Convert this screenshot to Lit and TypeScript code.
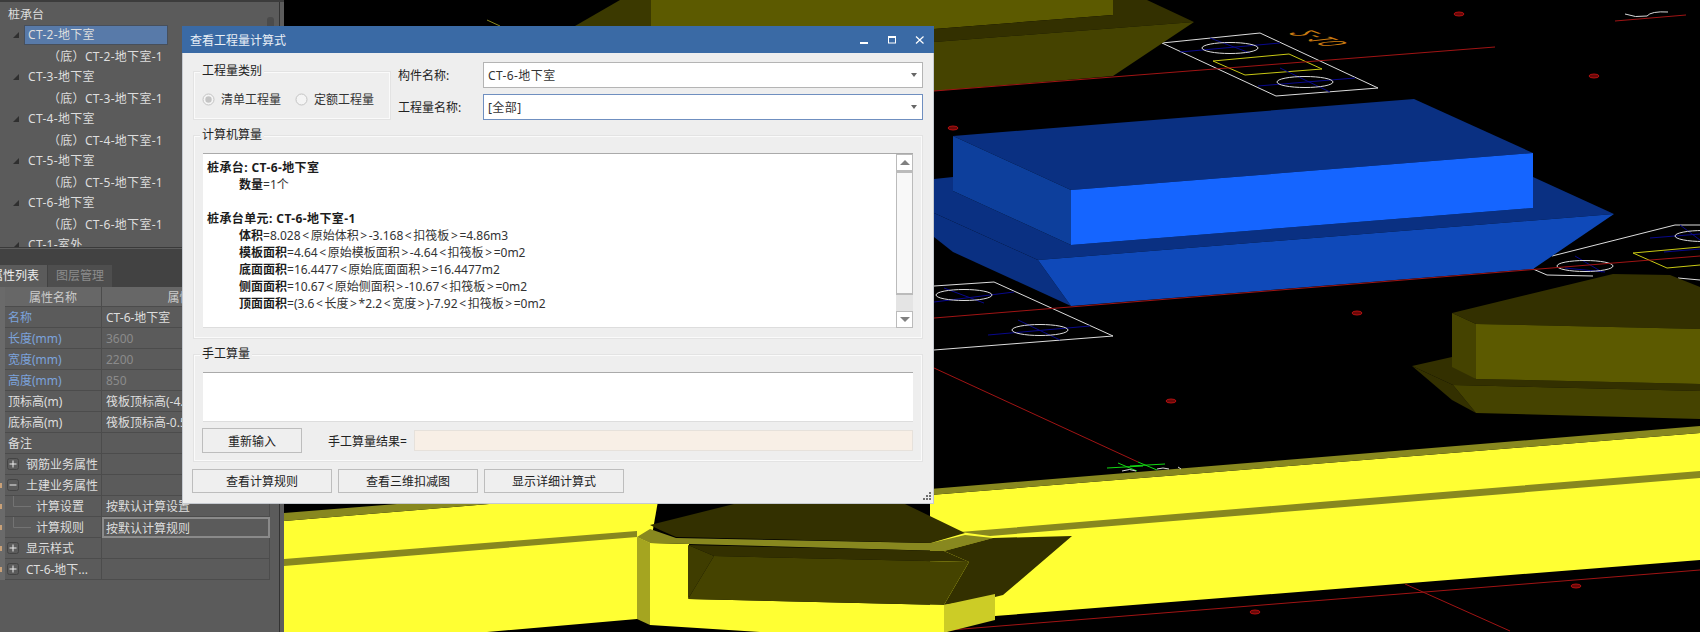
import { LitElement, html, svg, css } from "lit";
import { customElement } from "lit/decorators.js";

const treeItems = ["CT-2", "CT-3", "CT-4", "CT-5", "CT-6"];

// label cell, value cell, label colour variant, box kind
const propRows = [
  { name: "名称", value: "CT-6-地下室", blue: true },
  { name: "长度(mm)", value: "3600", blue: true, dim: true },
  { name: "宽度(mm)", value: "2200", blue: true, dim: true },
  { name: "高度(mm)", value: "850", blue: true, dim: true },
  { name: "顶标高(m)", value: "筏板顶标高(-4.2)" },
  { name: "底标高(m)", value: "筏板顶标高-0.5" },
  { name: "备注", value: "" },
  { name: "钢筋业务属性", value: "", box: "+" },
  { name: "土建业务属性", value: "", box: "-", mark: true },
  { name: "计算设置", value: "按默认计算设置", child: true, mark: true },
  { name: "计算规则", value: "按默认计算规则", child: true, selected: true, mark: true },
  { name: "显示样式", value: "", box: "+", mark: true },
  { name: "CT-6-地下...", value: "", box: "+", mark: true },
];

const detail = [
  { bold: "桩承台: CT-6-地下室" },
  { bold: "数量", text: "=1个", indent: true },
  { text: " " },
  { bold: "桩承台单元: CT-6-地下室-1" },
  { bold: "体积", text: "=8.028<原始体积>-3.168<扣筏板>=4.86m3", indent: true },
  { bold: "模板面积", text: "=4.64<原始模板面积>-4.64<扣筏板>=0m2", indent: true },
  { bold: "底面面积", text: "=16.4477<原始底面面积>=16.4477m2", indent: true },
  { bold: "侧面面积", text: "=10.67<原始侧面积>-10.67<扣筏板>=0m2", indent: true },
  { bold: "顶面面积", text: "=(3.6<长度>*2.2<宽度>)-7.92<扣筏板>=0m2", indent: true },
];

const BLUE_TOP = "#0a3082";
const OLIVE_BRIGHT = "#5c5a00";
const OLIVE_MID = "#454300";
const OLIVE_DARK = "#333000";
const YELLOW = "#ffff33";
const YELLOW_BAND = "#88881f";

// [points, fill], painted in order
const backShapes: [string, string][] = [
  // right hand beam
  ["930,495 1700,433 1700,560 995,616 930,625", YELLOW],
  ["930,489 1700,426 1700,433 930,495", YELLOW_BAND],
  ["960,532 1320,502 1700,471 1700,478 1320,509 990,536", YELLOW_BAND],
  // left hand beam
  ["284,521 660,490 637,619 487,632 284,632", YELLOW],
  ["284,513 660,483 660,490 284,521", YELLOW_BAND],
  ["284,559 637,531 637,537 284,566", YELLOW_BAND],
];

const pierShapes: [string, string][] = [
  ["637,537 650,543 650,625 637,619", "#a5a520"],
  ["650,543 689,544 689,599 944,605 944,632 760,632 650,625", YELLOW],
  ["650,529 676,538 931,543 965,535 993,538 944,551 650,543 637,537", YELLOW_BAND],
  ["650,525 734,504 905,504 965,533 931,543 676,537 660,530", OLIVE_DARK],
  ["993,538 1072,536 1003,595 995,597 944,605 969,562 944,551", OLIVE_DARK],
  ["688,545 944,551 969,562 714,556", OLIVE_DARK],
  ["688,545 714,556 688,599", "#3f3d00"],
  ["714,556 969,562 944,605 688,599", OLIVE_MID],
  ["944,605 995,594 995,620 947,632 944,632", "#cccc26"],
];

const blueShapes: [string, string][] = [
  ["934,179 953,177 953,191 1071,245 1533,208 1533,177 1614,214 1038,260 934,213", BLUE_TOP],
  ["934,213 1038,260 1071,306 953,252 934,237", BLUE_TOP],
  ["1038,260 1614,214 1533,269 1071,306", "#0f49b9"],
  ["953,136 1414,99 1533,153 1071,190", BLUE_TOP],
  ["953,136 1071,190 1071,245 953,191", "#0d3f9c"],
  ["1071,190 1533,153 1533,208 1071,245", "#1565ff"],
];

const oliveShapes: [string, string][] = [
  // top left block
  ["575,26 620,0 651,0 651,26", "#3b3900"],
  ["651,0 1113,0 1113,15 934,29 651,26", OLIVE_BRIGHT],
  ["934,29 1113,15 1113,0 1147,0 1194,22 934,42", OLIVE_DARK],
  ["934,42 1194,22 1113,76 934,91", OLIVE_MID],
  // right block
  ["1412,366 1452,357 1476,379 1700,384 1700,391 1453,385", OLIVE_DARK],
  ["1412,366 1453,385 1476,413 1452,400", OLIVE_DARK],
  ["1453,385 1700,391 1700,419 1476,413", OLIVE_MID],
  ["1452,313 1613,274 1670,275 1700,287 1700,329 1476,324", OLIVE_DARK],
  ["1452,313 1476,324 1476,379 1452,367", OLIVE_MID],
  ["1476,324 1700,329 1700,384 1476,379", OLIVE_BRIGHT],
];

const redLines = [
  [934, 91, 1495, 47],
  [1615, 21, 1686, 15],
  [934, 318, 1700, 256],
  [934, 368, 1138, 462],
  [950, 630, 1700, 570],
  [1405, 584, 1510, 631],
];

const redDots = [
  [953, 128],
  [1459, 14],
  [1594, 76],
  [1357, 313],
  [1171, 401],
  [1255, 612],
  [1576, 586],
];

// white pad outlines, ovals and their blue crosses
const padLines = [
  "1162,43 1260,33 1378,88 1276,96 1162,43",
  "934,286 994,282 1113,336 934,350",
  "1552,256 1675,225 1700,225",
  "1533,269 1547,275 1593,276",
  "1678,278 1700,280",
];
const padOvals = [
  [1230, 48],
  [1305, 82],
  [964, 295],
  [1040, 330],
  [1585, 266],
  [1703, 236],
];
const yellowLines = [
  "1213,61 1289,54 1322,69 1245,75 1213,61",
  "1700,247 1633,253 1667,268 1700,265",
];
const greenLines = [
  [1107, 468, 1143, 466],
  [1118, 463, 1137, 471],
  [1130, 466, 1165, 464],
  [1138, 462, 1157, 470],
];

const polys = (shapes: [string, string][]) =>
  shapes.map(([p, f]) => svg`<polygon points=${p} fill=${f}></polygon>`);

const lines = (items: number[][], color: string) =>
  items.map(
    ([x1, y1, x2, y2]) =>
      svg`<line x1=${x1} y1=${y1} x2=${x2} y2=${y2} stroke=${color}></line>`
  );

// the < and > in the formulas sit wider apart than the font sets them
const formula = (text?: string) =>
  (text ?? "")
    .split(/([<>])/)
    .map((p) => (p === "<" || p === ">" ? html`<span class="ang">${p}</span>` : p));

@customElement("app-root")
export class AppRoot extends LitElement {
  static styles = css`
    :host {
      display: flex;
      position: relative;
      width: 1700px;
      height: 632px;
      overflow: hidden;
      font-family: "Noto Sans", "Noto Sans CJK SC", sans-serif;
      font-size: 12px;
      color: #222;
    }

    /* left docked panel */
    .panel {
      width: 284px;
      flex: none;
      display: flex;
      flex-direction: column;
      box-sizing: border-box;
      background: #5b5b5b;
      border-top: 2px solid #3c3c3c;
      color: #dedede;
      box-shadow: inset -4px 0 0 #5c5c5c, inset -5px 0 0 #333;
    }
    .tree {
      height: 246px;
      flex: none;
      display: flex;
      box-sizing: border-box;
      padding: 1px 5px 0 0;
      overflow: hidden;
      border-bottom: 1px solid #3a3a3a;
    }
    .tree-list {
      flex: 1;
    }
    .thumb {
      width: 7px;
      height: 12px;
      margin: 14px 5px 0 0;
      background: #4b4b4b;
      border-radius: 3px 3px 0 0;
    }
    .node {
      height: 21px;
      display: flex;
      align-items: center;
      white-space: nowrap;
    }
    .node.root {
      padding-left: 8px;
    }
    .node.parent {
      padding-left: 13px;
    }
    .node.leaf {
      padding-left: 48px;
    }
    .node svg {
      width: 6px;
      height: 6px;
      margin-right: 5px;
      fill: #2f2f2f;
    }
    .node-label {
      box-sizing: border-box;
      width: 144px;
      height: 20px;
      line-height: 18px;
      padding-left: 3px;
      border: 1px solid transparent;
      letter-spacing: 0.3px;
    }
    .leaf-label {
      letter-spacing: 0.3px;
    }
    .node-label.sel {
      background: #587aa9;
      border-color: #474f5b;
    }
    .gap {
      height: 17px;
      flex: none;
      background: #424242;
      border-top: 1px solid #5e5e5e;
      box-sizing: border-box;
    }
    .tabs {
      display: flex;
      height: 22px;
      flex: none;
      overflow: hidden;
      background: #424242;
    }
    .tab {
      height: 22px;
      line-height: 22px;
      flex: none;
      white-space: nowrap;
    }
    .tab.on {
      width: 56px;
      margin-left: -9px;
      background: #5b5b5b;
      color: #eee;
    }
    .tab.off {
      width: 64px;
      margin-left: 1px;
      text-align: center;
      background: #4e4e4e;
      color: #8c8c8c;
    }
    .props {
      display: flex;
    }
    .stripe {
      width: 5px;
      flex: none;
      padding-top: 20px;
      background: #6a6a6a;
    }
    .stripe i {
      display: flex;
      align-items: center;
      height: 21px;
    }
    .stripe i.mark::before {
      content: "";
      width: 2px;
      height: 5px;
      background: #c9a178;
    }
    .grid {
      display: grid;
      width: 265px;
      grid-template-columns: 97px 168px;
      grid-template-rows: 20px;
      grid-auto-rows: 21px;
    }
    .cell {
      box-sizing: border-box;
      display: flex;
      align-items: center;
      border-bottom: 1px solid #4c4c4c;
      border-right: 1px solid #4c4c4c;
      white-space: nowrap;
      overflow: hidden;
    }
    .head {
      justify-content: center;
      background: #676767;
      color: #ccc;
    }
    .name {
      padding-left: 3px;
    }
    .name.blue {
      color: #7ca3dc;
    }
    .name.child {
      padding-left: 0;
    }
    .name.boxed {
      padding-left: 2px;
    }
    .name svg {
      flex: none;
    }
    .value {
      padding-left: 4px;
    }
    .value.dim {
      color: #8b8b8b;
    }
    .value.selected {
      border: 2px solid #8a8a8a;
      padding-left: 2px;
    }
    .box {
      width: 12px;
      height: 12px;
      margin-right: 7px;
    }

    /* 3d view */
    .view {
      flex: 1;
      background: #000;
    }
    .view svg {
      display: block;
    }

    /* floating dialog */
    .dialog {
      position: absolute;
      left: 182px;
      top: 26px;
      width: 752px;
      height: 478px;
      box-sizing: border-box;
      display: flex;
      flex-direction: column;
      background: #eeeeee;
      border: 1px solid #c6cad0;
      border-top: none;
    }
    .titlebar {
      height: 27px;
      flex: none;
      margin: 0 -1px;
      display: flex;
      align-items: center;
      padding-left: 8px;
      background: #3a6aa5;
      color: #e9eff6;
    }
    .title {
      flex: 1;
    }
    .win {
      display: block;
      margin-right: 9px;
    }
    .win + .win {
      margin-left: 9px;
    }
    .body {
      flex: 1;
      position: relative;
      display: flex;
      flex-direction: column;
      gap: 7px;
      padding: 9px 10px 0 9px;
    }
    .top {
      display: flex;
      height: 58px;
      flex: none;
    }
    fieldset {
      box-sizing: border-box;
      margin: 0 0 0 1px;
      min-width: 0;
      border: 1px solid #e3e3e3;
      box-shadow: inset 0 0 0 1px #fafafa;
    }
    legend {
      height: 16px;
      line-height: 16px;
      margin-left: -3px;
      padding: 0 2px;
      background: #eeeeee;
    }
    .kind legend {
      margin-left: -2px;
    }
    .kind {
      width: 198px;
      height: 57px;
      margin-top: 1px;
      flex: none;
      padding: 12px 0 0 8px;
      display: flex;
    }
    .radios {
      display: flex;
      align-items: center;
      height: 16px;
    }
    .radio {
      display: flex;
      align-items: center;
      gap: 6px;
      margin-right: 14px;
      color: #333;
    }
    .fields {
      flex: 1;
      margin-left: 7px;
      display: grid;
      grid-template-columns: 85px 1fr;
      grid-auto-rows: 26px;
      row-gap: 6px;
      align-items: center;
    }
    .combo {
      box-sizing: border-box;
      height: 26px;
      display: flex;
      align-items: center;
      justify-content: space-between;
      padding: 0 5px 0 4px;
      background: #fff;
      border: 1px solid #b4b4b4;
      color: #333;
      letter-spacing: 0.4px;
    }
    .combo.focus {
      border-color: #6f8fc0;
    }
    .caret {
      width: 0;
      height: 0;
      border: 3px solid transparent;
      border-top: 4px solid #666;
      border-bottom: 0;
    }
    .calc {
      height: 212px;
      flex: none;
      padding: 10px 9px 0;
    }
    .output {
      height: 175px;
      box-sizing: border-box;
      display: flex;
      background: #fff;
      border-top: 1px solid #aaa;
      border-bottom: 1px solid #ddd;
    }
    .lines {
      flex: 1;
      padding: 5px 0 0 4px;
      line-height: 17px;
      color: #333;
    }
    .lines b {
      color: #1c1c1c;
    }
    .line {
      white-space: pre;
      letter-spacing: 0.4px;
    }
    .line.indent {
      padding-left: 32px;
      letter-spacing: 0;
    }
    .ang {
      margin: 0 1.6px;
    }
    .scroll {
      width: 17px;
      flex: none;
      display: flex;
      flex-direction: column;
      background: #e4e4e4;
    }
    .scroll-btn {
      box-sizing: border-box;
      height: 17px;
      flex: none;
      display: flex;
      align-items: center;
      justify-content: center;
      background: #fff;
      border: 1px solid #bbb;
    }
    .scroll-thumb {
      height: 124px;
      flex: none;
      box-sizing: border-box;
      background: #f8f8f8;
      border: 1px solid #bbb;
      border-top-width: 2px;
      border-bottom-width: 2px;
      margin-bottom: 16px;
    }
    .tri-up,
    .tri-down {
      width: 0;
      height: 0;
      border: 5px solid transparent;
    }
    .tri-up {
      border-top: 0;
      border-bottom: 5px solid #808080;
    }
    .tri-down {
      border-bottom: 0;
      border-top: 5px solid #808080;
    }
    .manual {
      height: 116px;
      flex: none;
      padding: 10px 9px 0;
    }
    .entry {
      height: 50px;
      box-sizing: border-box;
      background: #fff;
      border-top: 1px solid #aaa;
      border-bottom: 1px solid #ddd;
    }
    .manual-row {
      display: flex;
      align-items: center;
      height: 25px;
      margin: 6px 0 0 -1px;
    }
    .btn {
      box-sizing: border-box;
      height: 25px;
      flex: none;
      display: flex;
      align-items: center;
      justify-content: center;
      background: #efefef;
      border: 1px solid #bdbdbd;
      color: #222;
    }
    .manual-row .btn {
      width: 100px;
    }
    .result-label {
      margin-left: 26px;
      width: 86px;
      flex: none;
      white-space: nowrap;
    }
    .result {
      flex: 1;
      height: 21px;
      box-sizing: border-box;
      background: #f8efe6;
      border: 1px solid #e6e1db;
    }
    .actions {
      display: flex;
      gap: 6px;
    }
    .actions .btn {
      width: 140px;
      height: 24px;
    }
    .grip {
      position: absolute;
      right: 1px;
      bottom: 2px;
      display: block;
    }
  `;

  renderTree() {
    return html`
      <div class="tree">
        <div class="tree-list">
          <div class="node root">桩承台</div>
          ${treeItems.map(
            (ct, i) => html`
              <div class="node parent">
                <svg viewBox="0 0 6 6"><polygon points="6,0 6,6 0,6"></polygon></svg>
                <span class="node-label ${i === 0 ? "sel" : ""}">${ct}-地下室</span>
              </div>
              <div class="node leaf">
                <span class="leaf-label">（底）${ct}-地下室-1</span>
              </div>
            `
          )}
          <div class="node parent">
            <svg viewBox="0 0 6 6"><polygon points="6,0 6,6 0,6"></polygon></svg>
            <span class="node-label">CT-1-室外</span>
          </div>
        </div>
        <div class="thumb"></div>
      </div>
    `;
  }

  renderBox(kind: string) {
    return html`<svg class="box" viewBox="0 0 12 12">
      <rect x="0.5" y="0.5" width="11" height="11" rx="2" fill="none" stroke="#444"></rect>
      <line x1="2.5" y1="6" x2="9.5" y2="6" stroke="#eee"></line>
      ${kind === "+"
        ? svg`<line x1="6" y1="2.5" x2="6" y2="9.5" stroke="#eee"></line>`
        : ""}
    </svg>`;
  }

  renderProps() {
    return html`
      <div class="props">
        <div class="stripe">
          ${propRows.map((r) => html`<i class=${r.mark ? "mark" : ""}></i>`)}
        </div>
        <div class="grid">
          <div class="cell head">属性名称</div>
          <div class="cell head">属性值</div>
          ${propRows.map(
            (r) => html`
              <div
                class="cell name ${r.blue ? "blue" : ""} ${r.child ? "child" : ""} ${r.box
                  ? "boxed"
                  : ""}"
              >
                ${r.box ? this.renderBox(r.box) : ""}
                ${r.child
                  ? html`<svg width="31" height="20" viewBox="0 0 31 20">
                      <path d="M8.5 0V10.5H26" fill="none" stroke="#737373"></path>
                    </svg>`
                  : ""}
                ${r.name}
              </div>
              <div class="cell value ${r.dim ? "dim" : ""} ${r.selected ? "selected" : ""}">
                ${r.value}
              </div>
            `
          )}
        </div>
      </div>
    `;
  }

  renderScene() {
    return html`<svg width="1416" height="632" viewBox="284 0 1416 632">
      ${polys(backShapes)}
      <line x1="487" y1="20" x2="500" y2="26" stroke="#8a8a20"></line>
      ${padLines.map(
        (p) => svg`<polyline points=${p} fill="none" stroke="#dcdcdc"></polyline>`
      )}
      ${yellowLines.map(
        (p) => svg`<polyline points=${p} fill="none" stroke="#c8c814"></polyline>`
      )}
      ${lines(
        [
          [1180, 52, 1280, 43],
          [1210, 38, 1250, 53],
          [1258, 86, 1355, 78],
          [1280, 68, 1330, 92],
          [934, 302, 1014, 292],
          [944, 288, 984, 303],
          [988, 335, 1090, 326],
          [1018, 320, 1060, 340],
          [1664, 252, 1700, 249],
          [1565, 268, 1605, 272],
          [1575, 256, 1602, 272],
          [1650, 238, 1700, 234],
          [1680, 225, 1700, 240],
        ],
        "#08088c"
      )}
      ${padOvals.map(
        ([x, y]) =>
          svg`<ellipse cx=${x} cy=${y} rx="28" ry="5.5" fill="none" stroke="#dcdcdc"></ellipse>`
      )}
      ${polys(oliveShapes)} ${polys(blueShapes)} ${lines(redLines, "#a01414")}
      ${redDots.map(
        ([x, y]) =>
          svg`<ellipse cx=${x} cy=${y} rx="5" ry="2" fill="#6a0808" stroke="#b01010"></ellipse>`
      )}
      ${polys(pierShapes)} ${lines(greenLines, "#14d814")}
      <path
        d="M1122 471q8-3 14 0M1157 469q6-2 12 0M1178 467l3 2M1625 14q10 4 22 2q4-5 21-4"
        fill="none"
        stroke="#d8d8d8"
      ></path>
      <text
        transform="matrix(1.4 0.5 2.6 -0.3 1311 30)"
        font-size="14"
        fill="#c87a10"
        font-family="Liberation Sans"
      >
        2-10
      </text>
    </svg>`;
  }

  renderDialog() {
    return html`
      <div class="dialog">
        <div class="titlebar">
          <span class="title">查看工程量计算式</span>
          <svg class="win" width="10" height="10" viewBox="0 0 10 10">
            <rect x="1" y="7" width="8" height="2" fill="#fff"></rect>
          </svg>
          <svg class="win" width="10" height="10" viewBox="0 0 10 10">
            <rect x="1.5" y="2" width="7" height="6" fill="none" stroke="#fff"></rect>
            <rect x="1" y="1" width="8" height="2" fill="#fff"></rect>
          </svg>
          <svg class="win" width="10" height="10" viewBox="0 0 10 10">
            <path d="M1 1.5l7.5 7M8.5 1.5l-7.5 7" fill="none" stroke="#fff" stroke-width="1.2"></path>
          </svg>
        </div>
        <div class="body">
          <div class="top">
            <fieldset class="kind">
              <legend>工程量类别</legend>
              <div class="radios">
                <span class="radio">
                  <svg width="13" height="13" viewBox="0 0 13 13">
                    <circle cx="6.5" cy="6.5" r="5.5" fill="#f4f4f4" stroke="#c4c4c4"></circle>
                    <circle cx="6.5" cy="6.5" r="3.2" fill="#c4c4c4"></circle>
                  </svg>
                  清单工程量
                </span>
                <span class="radio">
                  <svg width="13" height="13" viewBox="0 0 13 13">
                    <circle cx="6.5" cy="6.5" r="5.5" fill="#f4f4f4" stroke="#c4c4c4"></circle>
                  </svg>
                  定额工程量
                </span>
              </div>
            </fieldset>
            <div class="fields">
              <span>构件名称:</span>
              <div class="combo"><span>CT-6-地下室</span><i class="caret"></i></div>
              <span>工程量名称:</span>
              <div class="combo focus"><span>[全部]</span><i class="caret"></i></div>
            </div>
          </div>
          <fieldset class="calc">
            <legend>计算机算量</legend>
            <div class="output">
              <div class="lines">
                ${detail.map(
                  (d) =>
                    html`<div class="line ${d.indent ? "indent" : ""}"><b>${d.bold}</b>${formula(d.text)}</div>`
                )}
              </div>
              <div class="scroll">
                <div class="scroll-btn"><i class="tri-up"></i></div>
                <div class="scroll-thumb"></div>
                <div class="scroll-btn"><i class="tri-down"></i></div>
              </div>
            </div>
          </fieldset>
          <fieldset class="manual">
            <legend>手工算量</legend>
            <div class="entry"></div>
            <div class="manual-row">
              <div class="btn">重新输入</div>
              <span class="result-label">手工算量结果=</span>
              <div class="result"></div>
            </div>
          </fieldset>
          <div class="actions">
            <div class="btn">查看计算规则</div>
            <div class="btn">查看三维扣减图</div>
            <div class="btn">显示详细计算式</div>
          </div>
          <svg class="grip" width="9" height="9" viewBox="0 0 9 9" fill="#707070">
            <rect x="6" y="0" width="2" height="2"></rect>
            <rect x="3" y="3" width="2" height="2"></rect>
            <rect x="6" y="3" width="2" height="2"></rect>
            <rect x="0" y="6" width="2" height="2"></rect>
            <rect x="3" y="6" width="2" height="2"></rect>
            <rect x="6" y="6" width="2" height="2"></rect>
          </svg>
        </div>
      </div>
    `;
  }

  render() {
    return html`
      <div class="panel">
        ${this.renderTree()}
        <div class="gap"></div>
        <div class="tabs">
          <div class="tab on">属性列表</div>
          <div class="tab off">图层管理</div>
        </div>
        ${this.renderProps()}
      </div>
      <div class="view">${this.renderScene()}</div>
      ${this.renderDialog()}
    `;
  }
}
